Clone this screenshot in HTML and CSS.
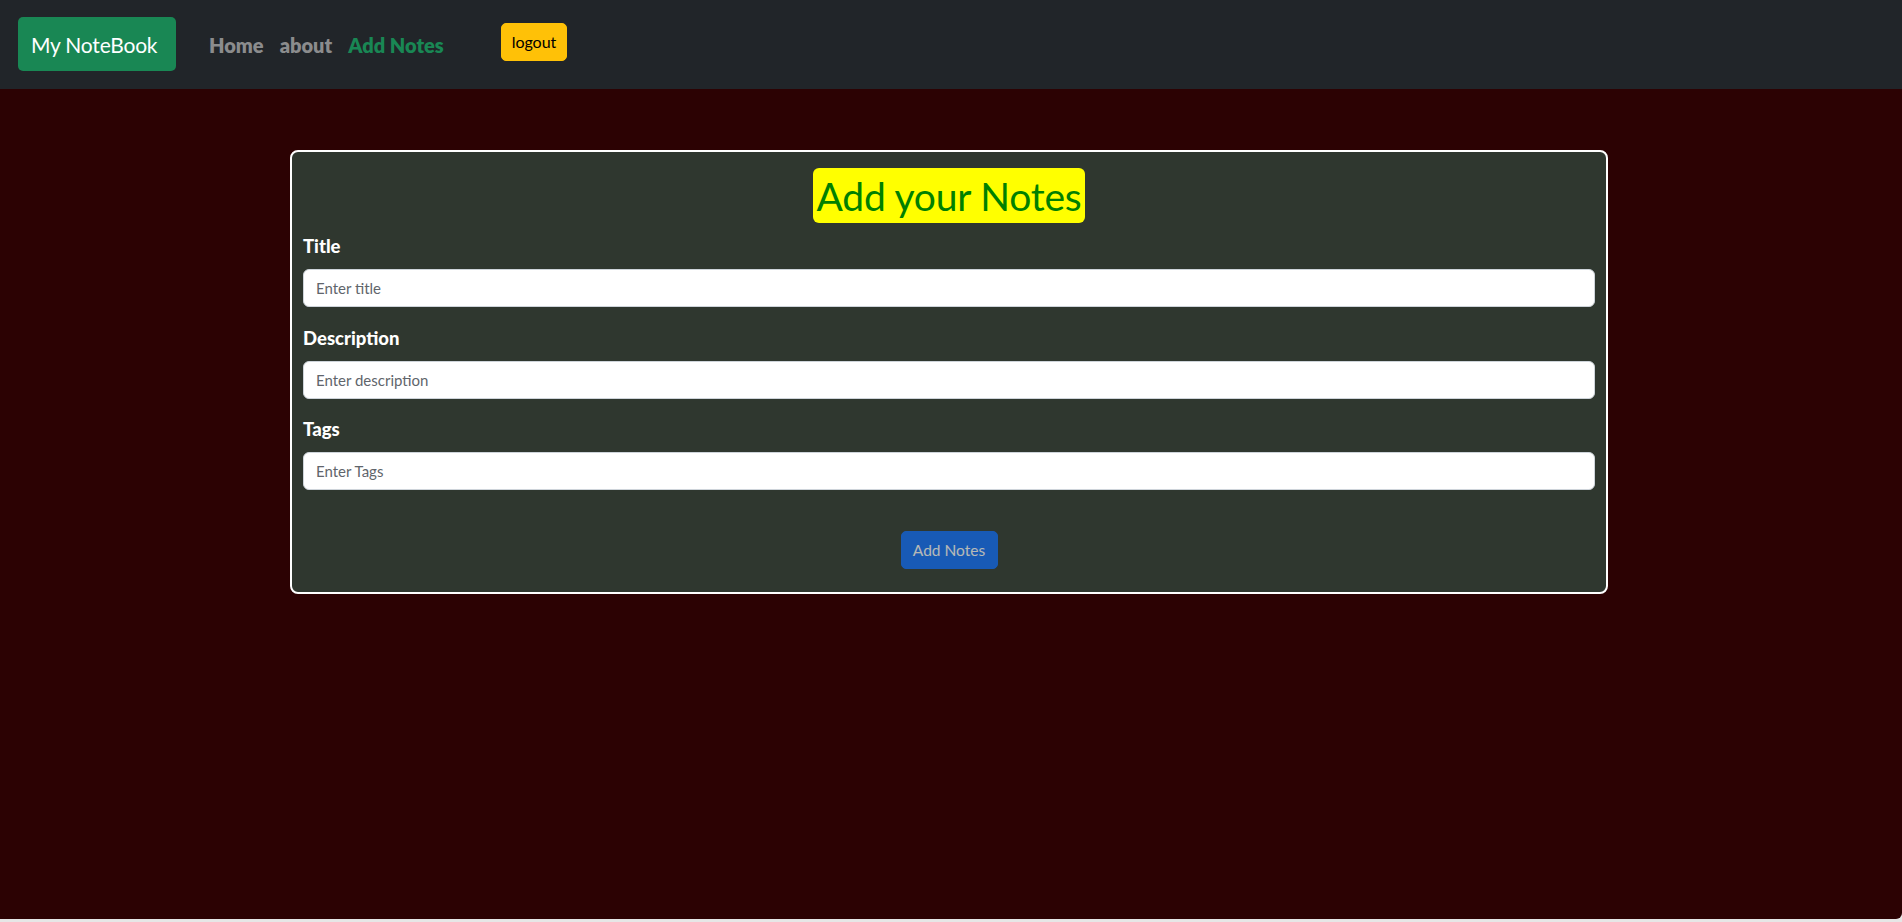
FILE: index.html
```html
<!DOCTYPE html>
<html lang="en">
<head>
<meta charset="utf-8">
<title>My NoteBook</title>
<link rel="stylesheet" href="styles.css">
</head>
<body>
<div class="page">
  <nav class="navbar">
    <a class="brand" href="#">My NoteBook</a>
    <ul class="nav-links">
      <li><a class="nav-link" href="#">Home</a></li>
      <li><a class="nav-link" href="#">about</a></li>
      <li><a class="nav-link active" href="#">Add Notes</a></li>
    </ul>
    <button class="btn-logout" type="button">logout</button>
  </nav>

  <main class="main">
    <form class="card">
      <div class="heading-row">
        <h1 class="heading">Add your Notes</h1>
      </div>
      <div class="field">
        <label class="label" for="title">Title</label>
        <input class="input" id="title" type="text" placeholder="Enter title">
      </div>
      <div class="field">
        <label class="label" for="description">Description</label>
        <input class="input" id="description" type="text" placeholder="Enter description">
      </div>
      <div class="field">
        <label class="label" for="tags">Tags</label>
        <input class="input" id="tags" type="text" placeholder="Enter Tags">
      </div>
      <div class="actions">
        <button class="btn-primary" type="submit" disabled>Add Notes</button>
      </div>
    </form>
  </main>
</div>
</body>
</html>
```

FILE: styles.css
```css
html {
  background: #e6e6e6;
}

body {
  margin: 0;
  font-family: "Lato", "Open Sans", "Liberation Sans", sans-serif;
}

.page {
  height: 919px;
  background: #2c0203;
  border-bottom-right-radius: 6px;
  overflow: hidden;
}

.navbar {
  height: 89px;
  background: #212529;
  display: flex;
  align-items: center;
  padding: 0 0 0 18px;
  box-sizing: border-box;
}

.brand {
  display: flex;
  align-items: center;
  width: 158px;
  height: 54px;
  box-sizing: border-box;
  padding-left: 13px;
  margin-top: -1px;
  background: #198754;
  border-radius: 5px;
  color: #fff;
  font-size: 21px;
  text-decoration: none;
  letter-spacing: -0.2px;
}

.nav-links {
  list-style: none;
  margin: 1px 0 0;
  padding: 0 0 0 33px;
  width: 325px;
  box-sizing: border-box;
  display: flex;
  gap: 16px;
}

.nav-link {
  color: #8b8c8d;
  font-weight: 800;
  font-size: 20px;
  text-decoration: none;
}

.nav-link.active {
  color: #198754;
}

.btn-logout {
  height: 38px;
  width: 66px;
  padding: 0;
  background: #ffc107;
  border: 1px solid #ffc107;
  border-radius: 5px;
  color: #000;
  font-family: inherit;
  font-size: 16px;
  margin-top: -6px;
}

.main {
  padding-top: 61px;
  display: flex;
  justify-content: center;
}

.card {
  width: 1318px;
  margin-left: -4px;
  box-sizing: border-box;
  border: 2px solid #fff;
  border-radius: 8px;
  background: #2f372f;
  padding: 16px 11px 23px;
}

.heading-row {
  display: flex;
  justify-content: center;
  margin-bottom: 9px;
}

.heading {
  margin: 0;
  height: 55px;
  display: flex;
  align-items: center;
  padding: 0 4px;
  background: #ffff00;
  color: #008000;
  font-weight: 400;
  font-size: 39px;
  border-radius: 6px;
  letter-spacing: -0.2px;
}

.field {
  margin-bottom: 16.5px;
}

.label {
  display: block;
  color: #fff;
  font-weight: 900;
  font-size: 18.5px;
  line-height: 28px;
  margin-bottom: 9px;
}

.input {
  display: block;
  width: 100%;
  height: 38px;
  box-sizing: border-box;
  padding: 0 12px;
  border: 1px solid #ced4da;
  border-radius: 6px;
  background: #fff;
  font-family: inherit;
  font-size: 15px;
  color: #212529;
}

.input::placeholder {
  color: #5f656b;
}

.actions {
  display: flex;
  justify-content: center;
  padding-top: 24.5px;
}

.btn-primary {
  height: 38px;
  width: 97px;
  padding: 0;
  background: #0d6efd;
  border: 1px solid #0d6efd;
  border-radius: 5px;
  color: #fff;
  font-family: inherit;
  font-size: 15.5px;
  opacity: 0.65;
}
```
